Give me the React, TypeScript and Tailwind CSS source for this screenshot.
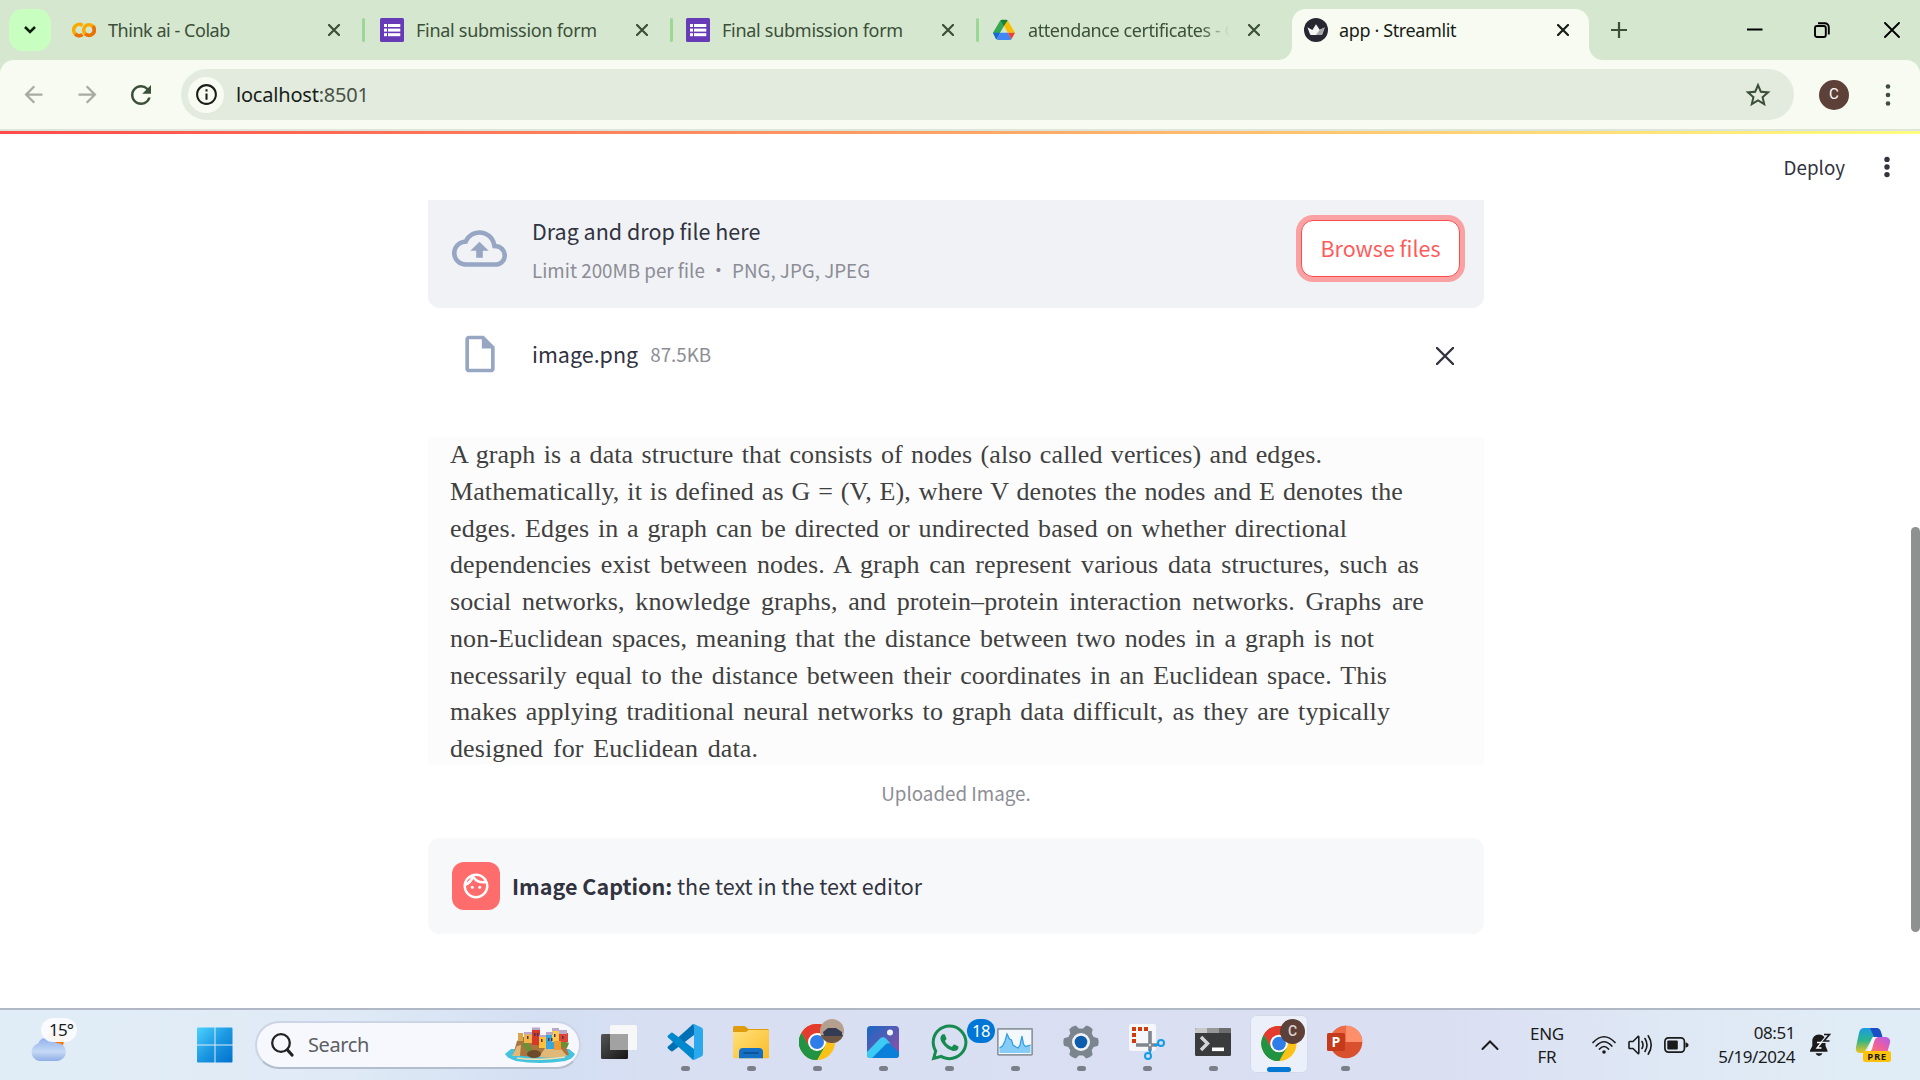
import React from "react";
import {
  MdArrowBack,
  MdArrowForward,
  MdRefresh,
  MdInfoOutline,
  MdStarBorder,
  MdOutlineCloudUpload,
  MdOutlineInsertDriveFile,
  MdOutlineFace,
} from "react-icons/md";
import { FaWhatsapp } from "react-icons/fa";

const Cross = ({ className = "", size = 12, sw = 2.2 }: { className?: string; size?: number; sw?: number }) => (
  <svg width={size} height={size} viewBox={`0 0 ${size} ${size}`} className={className}>
    <path d={`M1 1L${size - 1} ${size - 1}M${size - 1} 1L1 ${size - 1}`} stroke="currentColor" strokeWidth={sw} strokeLinecap="round" fill="none" />
  </svg>
);

const Dots = ({ gap, r }: { gap: number; r: number }) => (
  <svg width="8" height="28" viewBox="0 0 8 28" fill="currentColor">
    <circle cx="4" cy={14 - gap} r={r} />
    <circle cx="4" cy="14" r={r} />
    <circle cx="4" cy={14 + gap} r={r} />
  </svg>
);

const Colab = () => (
  <svg width="24" height="24" viewBox="0 0 24 24" fill="none" strokeWidth="3.6">
    <path d="M10.5 7.4A5.6 5.6 0 1 0 10.5 16.6" stroke="#f9ab00" />
    <path d="M3.3 16A5.6 5.6 0 0 0 10.5 16.6" stroke="#e8710a" />
    <circle cx="17" cy="12" r="5.3" stroke="#f9ab00" />
    <path d="M20.8 8.2A5.3 5.3 0 0 1 13.2 15.8" stroke="#e8710a" />
  </svg>
);

const Forms = () => (
  <svg width="24" height="24" viewBox="0 0 24 24">
    <rect width="24" height="24" rx="1.5" fill="#673ab7" />
    <g fill="#fff">
      <rect x="4" y="6" width="3" height="3" />
      <rect x="4" y="10.6" width="3" height="3" />
      <rect x="4" y="15.2" width="3" height="3" />
      <rect x="8" y="6" width="12.3" height="3" />
      <rect x="8" y="10.6" width="12.3" height="3" />
      <rect x="8" y="15.2" width="12.3" height="3" />
    </g>
  </svg>
);

const Drive = () => (
  <svg width="24" height="22" viewBox="0 0 24 22">
    <path d="M8.2 1.5 1 13.8l3.5 6L12 7z" fill="#34a853" />
    <path d="M8.2 1.5Q9 .8 10 .8h4q1.200 0 1.800.7L12 7.500z" fill="#188038" />
    <path d="M15.8 1.500 23 13.800h-7.100L12 7z" fill="#fbbc04" />
    <path d="M1 13.800h7.200l-3.600 6.500Q4 20 3.500 19.200z" fill="#1967d2" />
    <path d="M8.200 13.800h7.700l3.500 6.500Q19 21 17.500 21h-11q-1.200 0-1.900-.7z" fill="#4285f4" />
    <path d="M15.900 13.800H23l-3 5.500-.7 1z" fill="#ea4335" />
  </svg>
);

const Crown = () => (
  <svg width="24" height="24" viewBox="0 0 24 24">
    <circle cx="12" cy="12" r="12" fill="#262730" />
    <path d="M3.400 9.300 8.400 12 12 6.300l3.700 5.500 5-2.400-2.500 6.900q-.3.700-1 .7H7q-.7 0-1-.7z" fill="#f4f4f4" />
    <path d="m20.700 9.400-5 2.400L12 17h5.200q.7 0 1-.7z" fill="#a9a9ab" />
  </svg>
);

function Tab({ icon, title, sep, titleClass, fade }: { icon: React.ReactNode; title: string; sep?: boolean; titleClass: string; fade?: boolean }) {
  return (
    <div className="flex h-full w-[306px] items-center text-[#3b4f39]">
      <div className="flex w-6 justify-center">{icon}</div>
      <div
        className={
          "ml-3 w-[201px] overflow-hidden whitespace-nowrap text-[18px] leading-[28px] " +
          titleClass +
          (fade ? " [mask-image:linear-gradient(to_right,#000_86%,transparent)]" : "")
        }
      >
        {title}
      </div>
      <Cross className="ml-[19px]" />
      {sep && <div className="ml-[22px] h-6 w-[3px] rounded-full bg-[#9bd795]" />}
    </div>
  );
}

function TabStrip() {
  return (
    <div className="flex h-[60px] items-center bg-[#d5e7cf]">
      <div className="ml-[9px] flex h-[42px] w-[42px] items-center justify-center rounded-[14px] bg-[#c8ffc0]">
        <svg width="14" height="10" viewBox="0 0 14 10">
          <path d="M2 2l5 5 5-5" fill="none" stroke="#0d1f0d" strokeWidth="2.600" />
        </svg>
      </div>
      <div className="ml-[21px] flex h-full">
        <Tab icon={<Colab />} title="Think ai - Colab" sep titleClass="tracking-[-0.46px]" />
        <div className="w-[2px]" />
        <Tab icon={<Forms />} title="Final submission form" sep titleClass="tracking-[-0.28px]" />
        <Tab icon={<Forms />} title="Final submission form" sep titleClass="tracking-[-0.28px]" />
        <Tab icon={<Drive />} title="attendance certificates - G" titleClass="tracking-[-0.42px]" fade />
      </div>
      <div className="-ml-[20px] flex h-full items-end">
        <svg width="14" height="14" viewBox="0 0 14 14">
          <path d="M14 0v14H0A14 14 0 0 0 14 0z" fill="#f8fbf2" />
        </svg>
        <div className="flex h-[51px] w-[297px] items-center rounded-t-[14px] bg-[#f8fbf2] pb-[9px] pl-3 text-[#171d17]">
          <Crown />
          <div className="ml-[11px] w-[218px] whitespace-nowrap text-[18px] leading-[28px] tracking-[-0.38px]">app · Streamlit</div>
          <Cross />
        </div>
        <svg width="14" height="14" viewBox="0 0 14 14">
          <path d="M0 0v14H14A14 14 0 0 1 0 0z" fill="#f8fbf2" />
        </svg>
      </div>
      <svg className="ml-2" width="16" height="16" viewBox="0 0 16 16">
        <path d="M8 0v16M0 8h16" stroke="#3b4f39" strokeWidth="2.200" />
      </svg>
      <svg className="ml-[120px]" width="16" height="16" viewBox="0 0 16 16">
        <path d="M0 7.500h15.500" stroke="#000" strokeWidth="2" />
      </svg>
      <svg className="ml-[51px]" width="16" height="16" viewBox="0 0 16 16" fill="none" stroke="#000" strokeWidth="1.900">
        <rect x="1" y="4" width="10.800" height="11" rx="2" />
        <path d="M4 1.200h6.800a4 4 0 0 1 4 4V12.500" />
      </svg>
      <Cross className="ml-[54px] text-black" size={16} sw={1.9} />
    </div>
  );
}

function Toolbar() {
  return (
    <div className="bg-[#d5e7cf]">
      <div className="flex h-[69px] items-center rounded-t-[14px] bg-[#f8fbf2] text-[#3b4f39]">
        <MdArrowBack className="ml-5 text-[#a6aca2]" size={27} />
        <MdArrowForward className="ml-[27px] text-[#a6aca2]" size={27} />
        <MdRefresh className="ml-[25px]" size={30} />
        <div className="ml-[25px] flex h-[51px] w-[1613px] items-center rounded-full bg-[#e3ebdf]">
          <div className="ml-[7px] flex h-9 w-9 items-center justify-center rounded-full bg-[#f8fbf2] text-[#171d17]">
            <MdInfoOutline size={25} />
          </div>
          <div className="ml-3 grow whitespace-nowrap text-[20px] leading-[28px] tracking-[-0.2px] text-[#171d17]">
            localhost<span className="text-[#475245]">:8501</span>
          </div>
          <MdStarBorder className="mr-[21px]" size={30} />
        </div>
        <div className="ml-[25px] flex h-[30px] w-[30px] items-center justify-center rounded-full bg-[#5d4037] font-[Roboto] text-[15px] text-white">C</div>
        <div className="ml-[35px]">
          <Dots gap={8.500} r={2.300} />
        </div>
      </div>
    </div>
  );
}

const paragraph: [string, string][] = [
  ["A graph is a data structure that consists of nodes (also called vertices) and edges.", "w-[872px]"],
  ["Mathematically, it is defined as G = (V, E), where V denotes the nodes and E denotes the", "w-[953px]"],
  ["edges. Edges in a graph can be directed or undirected based on whether directional", "w-[897px]"],
  ["dependencies exist between nodes. A graph can represent various data structures, such as", "w-[969px]"],
  ["social networks, knowledge graphs, and protein–protein interaction networks. Graphs are", "w-[974px]"],
  ["non-Euclidean spaces, meaning that the distance between two nodes in a graph is not", "w-[924px]"],
  ["necessarily equal to the distance between their coordinates in an Euclidean space. This", "w-[937px]"],
  ["makes applying traditional neural networks to graph data difficult, as they are typically", "w-[940px]"],
  ["designed for Euclidean data.", "w-[308px]"],
];

function Content() {
  return (
    <div className="flex h-[874px] bg-white font-['Noto_Sans_CJK_SC',sans-serif] text-[#31333f]">
      <div className="ml-[428px] w-[1056px] pt-[66px]">
        <div className="flex h-[108px] rounded-b-[12px] bg-[#f0f2f6]">
          <MdOutlineCloudUpload className="mt-[21px] ml-6 text-[#97a6c3]" size={55} />
          <div className="ml-[25px] grow whitespace-nowrap">
            <div className="mt-[14px] text-[21.500px] leading-[34px]">Drag and drop file here</div>
            <div className="mt-[7px] text-[18.800px] leading-[30px] text-[#8c8d95]">Limit 200MB per file • PNG, JPG, JPEG</div>
          </div>
          <div className="mt-[20px] mr-6 flex h-[57px] w-[159px] items-center justify-center rounded-[12px] border-[1.500px] border-[#ff4b4b] bg-white text-[21.500px] whitespace-nowrap text-[#ff5a5a] ring-[5px] ring-[#f9a1a3]">
            Browse files
          </div>
        </div>
        <div className="flex h-[92px] items-center">
          <MdOutlineInsertDriveFile className="ml-[30px] text-[#97a6c3]" size={44} />
          <div className="ml-[30px] text-[21.500px] leading-[34px]">image.png</div>
          <div className="ml-3 grow text-[18.800px] leading-[34px] text-[#8c8d95]">87.5KB</div>
          <Cross className="mt-1 mr-[30px]" size={18} sw={2.400} />
        </div>
        <div className="mt-[38px] h-[327px] overflow-hidden bg-[#fcfcfc] pl-[22px] font-[Georgia,'Liberation_Serif',serif] text-[26px] leading-[36.750px] text-[#404040]">
          <div className="-mt-px">
            {paragraph.map(([line, w]) => (
              <div key={line} className={"whitespace-nowrap tracking-[0.1px] [text-align-last:justify] " + w}>
                {line}
              </div>
            ))}
          </div>
        </div>
        <div className="flex h-[73px] justify-center pt-[13px] text-[18.800px] leading-[30px] text-[#8c8d95]">Uploaded Image.</div>
        <div className="flex h-24 items-center rounded-[12px] bg-[#f7f8fa] pl-6">
          <div className="flex h-12 w-12 items-center justify-center rounded-[12px] bg-[#ff6c6c] text-white">
            <MdOutlineFace size={30} />
          </div>
          <div className="ml-3 text-[21.500px] leading-[34px] whitespace-nowrap">
            <span className="font-semibold">Image Caption:</span> the text in the text editor
          </div>
        </div>
      </div>
      <div className="flex grow items-start justify-end">
        <div className="mt-[18px] mr-[38px] text-[18.800px] leading-[30px]">Deploy</div>
        <div className="mt-[19px] h-7 w-2">
          <Dots gap={7.600} r={2.700} />
        </div>
        <div className="mt-[393px] ml-5 h-[405px] w-[9px] rounded-full bg-[#8f9090]" />
      </div>
    </div>
  );
}

const Weather = () => (
  <svg width="50" height="48" viewBox="0 0 50 48">
    <defs>
      <linearGradient id="cloud" x1="0" y1="0" x2="0" y2="1">
        <stop offset="0" stopColor="#8fb0ec" />
        <stop offset=".6" stopColor="#c6d9f5" />
        <stop offset="1" stopColor="#8eaee6" />
      </linearGradient>
    </defs>
    <circle cx="26" cy="24" r="9" fill="#f5790d" />
    <path d="M10 44a9 9 0 0 1-1-17.500A10 10 0 0 1 27 26a9 9 0 0 1 1.500 18z" fill="url(#cloud)" />
    <rect x="12" y="1" width="36" height="24" rx="12" fill="#fbfcfe" fillOpacity=".94" />
  </svg>
);

const Windows = () => (
  <svg width="36" height="36" viewBox="0 0 36 36">
    <defs>
      <linearGradient id="win" gradientUnits="userSpaceOnUse" x1="0" y1="0" x2="36" y2="36">
        <stop offset="0" stopColor="#4ed3ff" />
        <stop offset=".5" stopColor="#1c98e2" />
        <stop offset="1" stopColor="#0070cf" />
      </linearGradient>
    </defs>
    <path d="M0 1.500Q0 .5 1 .5h16.500v17H0zM18.500.5h16q1 0 1 1v16h-17zM0 18.500h17.500v17H1q-1 0-1-1zM18.500 18.500h17v16q0 1-1 1h-16z" fill="url(#win)" />
  </svg>
);

const Village = () => (
  <svg width="70" height="36" viewBox="0 0 70 36">
    <path d="M0 27l6-5h58l6 5q-2 5-10 7-25 4-49 0Q3 32 0 27z" fill="#43c3dd" />
    <path d="M8 28l4-14 8-5 10 4 16-1 13 2 5 14q-25 4-56 0z" fill="#a87440" />
    <path d="M7 29l5-10 4-1-1 11zM34 30l8-12 10-1 10 12q-14 3-28 1z" fill="#e0b878" />
    <path d="M17 17l5-3 5 8-2 7zM56 13l8 3-2 5-6-1z" fill="#6c8f35" />
    <rect x="13" y="6" width="5" height="8" fill="#d8a848" />
    <rect x="19" y="7" width="8" height="9" fill="#f3b44b" />
    <rect x="27" y="2" width="8" height="16" fill="#d5392b" />
    <rect x="34" y="9" width="7" height="12" fill="#ffc13b" />
    <rect x="41" y="7" width="8" height="15" fill="#38a5dd" />
    <rect x="47" y="3" width="7" height="12" fill="#ffcb4a" />
    <rect x="54" y="6" width="9" height="9" fill="#dd4536" />
    <rect x="49" y="14" width="7" height="9" fill="#f09a31" />
    <path d="M19 5h8v2.500h-8zM27 .5h8V3h-8zM34 8h7v2h-7zM41 5h7v3h-7zM47 1h7v3h-7zM54 3h8v4h-8z" fill="#b9a8c8" />
    <path d="M29 6h1.500v3H29zM32 6h1.500v3H32zM36 12h1.500v3H36zM43 11h1.500v3H43zM46 11h1.500v3H46zM49 7h1.500v3H49zM57 9h1.500v3H57zM22 9h1.500v3H22z" fill="#4b3650" />
    <ellipse cx="29" cy="27" rx="7" ry="4" fill="#6e4a2b" />
    <path d="M12 31q20 3 48-1" stroke="#f4dfae" strokeWidth="1.500" fill="none" />
  </svg>
);

const TaskView = () => (
  <svg width="36" height="36" viewBox="0 0 36 36">
    <defs>
      <linearGradient id="tv" x1="0" y1="0" x2="1" y2="1">
        <stop offset="0" stopColor="#555" />
        <stop offset="1" stopColor="#161616" />
      </linearGradient>
    </defs>
    <rect y="10" width="27" height="25" rx="1.500" fill="url(#tv)" />
    <rect x="9" y="1" width="27" height="25" rx="1.500" fill="#f7f7f7" />
    <path d="M9 10h18v16H10.500Q9 26 9 24.500z" fill="#a2a2a2" />
  </svg>
);

const VSCode = () => (
  <svg width="36" height="36" viewBox="0 0 36 36">
    <path d="M27 0v11L6 27q-1.200.8-2.200 0L1 24.600q-1-1 0-2L25 1z" fill="#0070b5" />
    <path d="M27 36V25L6 9q-1.200-.8-2.200 0L1 11.400q-1 1 0 2L25 35z" fill="#0088cf" />
    <path d="M27 0l7.500 3.600Q36 4.400 36 6v24q0 1.600-1.500 2.400L27 36q-1.500.2-2.500-.8Q27 36 27 33V3q0-3-2.500-2.200Q25.500-.2 27 0z" fill="#2ba9ec" />
  </svg>
);

const Folder = () => (
  <svg width="36" height="36" viewBox="0 0 36 36">
    <defs>
      <linearGradient id="fold" x1="0" y1="0" x2="1" y2="1">
        <stop offset="0" stopColor="#ffe17e" />
        <stop offset="1" stopColor="#fcbb24" />
      </linearGradient>
    </defs>
    <path d="M0 3.500Q0 2 1.500 2H11q1 0 2 1l2.500 2H34.500Q36 5 36 6.500V20H0z" fill="#e09b0b" />
    <path d="M0 8h12q1.500 0 2.500-1l1-1H35q1 0 1 1v26q0 1.300-1.300 1.300H1.300Q0 34.300 0 33z" fill="url(#fold)" />
    <path d="M6 34.300V28q0-4 4-4h16q4 0 4 4v6.300z" fill="#1370c4" />
    <path d="M11 29h14" stroke="#0b4a8c" strokeWidth="1.600" strokeLinecap="round" />
  </svg>
);

const Chrome = () => (
  <svg width="36" height="36" viewBox="0 0 36 36">
    <circle cx="18" cy="18" r="18" fill="#fbc116" />
    <path d="M18 18 2.400 9A18 18 0 0 1 33.600 9H18z" fill="#e33b2e" />
    <path d="M2.400 9A18 18 0 0 0 18 36l7.800-13.500L18 18 10.200 22.500z" fill="#229342" />
    <path d="M2.400 9A18 18 0 0 1 33.600 9H18L10.200 22.500z" fill="#e33b2e" />
    <path d="M2.400 9l7.800 13.500L18 27l4 1-4 8A18 18 0 0 1 2.400 9z" fill="#229342" />
    <circle cx="18" cy="18" r="9" fill="#fff" />
    <circle cx="18" cy="18" r="7" fill="#2f7de9" />
  </svg>
);

const Photos = () => (
  <svg width="32" height="32" viewBox="0 0 32 32">
    <defs>
      <linearGradient id="ph" x1="0" y1="0" x2="1" y2="1">
        <stop offset="0" stopColor="#1769c6" />
        <stop offset=".6" stopColor="#6558b0" />
        <stop offset="1" stopColor="#9a4da8" />
      </linearGradient>
      <clipPath id="phc">
        <rect width="32" height="32" rx="3.500" />
      </clipPath>
    </defs>
    <g clipPath="url(#phc)">
      <rect width="32" height="32" fill="url(#ph)" />
      <path d="M4 32l14-14q2.500-1.500 5 0l12 11v5H4z" fill="#0b80d8" />
      <path d="M-2 28 13 12.500q3-2.500 6 0l4.500 5q-3-1-5 1L5 32H-2z" fill="#3ccbf4" />
      <circle cx="23" cy="6.500" r="3" fill="#f1f3fb" />
    </g>
  </svg>
);

const Monitor = () => (
  <svg width="36" height="28" viewBox="0 0 36 28">
    <rect x=".8" y=".8" width="34.400" height="26" rx="1" fill="#f2f8fc" stroke="#8e979e" strokeWidth="1.800" />
    <path d="M2.500 25V20l3-2L8 13l2-7 2.500 5 2 1 1.500 5 3 2 2 1 2-3 2-9 1.500 8 2 2.500L33.500 17v8z" fill="#86ccf6" />
    <path d="M2.500 20l3-2L8 13l2-7 2.500 5 2 1 1.500 5 3 2 2 1 2-3 2-9 1.500 8 2 2.500L33.500 17" fill="none" stroke="#2f9de0" strokeWidth="1.200" />
  </svg>
);

const Gear = () => (
  <svg width="36" height="36" viewBox="0 0 36 36">
    <g fill="#7b858d">
      <circle cx="18" cy="18" r="13.500" />
      {[30, 90, 150, 210, 270, 330].map((a) => (
        <path key={a} d="M12.500 7 14.300 1Q18-.3 21.700 1L23.500 7z" transform={`rotate(${a} 18 18)`} />
      ))}
    </g>
    <circle cx="18" cy="18" r="9" fill="#f0f2f4" />
    <circle cx="18" cy="18" r="6.300" fill="#0d5cae" />
  </svg>
);

const Snip = () => (
  <svg width="36" height="36" viewBox="0 0 36 36">
    <rect width="27" height="27" rx="2.500" fill="#f6f7fa" />
    <g fill="#d43b0a">
      <rect x="3" y="3" width="4" height="4" />
      <rect x="9" y="3" width="4" height="4" />
      <rect x="15" y="3" width="4" height="4" />
      <rect x="3" y="9" width="4" height="4" />
      <rect x="3" y="15" width="4" height="4" />
    </g>
    <path d="M21 7v20M7 21h21" stroke="#80868d" strokeWidth="3.600" />
    <circle cx="21" cy="21" r="1.200" fill="#ddd" />
    <circle cx="32" cy="19" r="3" fill="none" stroke="#169be6" strokeWidth="2" />
    <circle cx="19" cy="32" r="3" fill="none" stroke="#169be6" strokeWidth="2" />
    <path d="M25 21l5 0M21 25v5" stroke="#169be6" strokeWidth="2" />
  </svg>
);

const Terminal = () => (
  <svg width="36" height="28" viewBox="0 0 36 28">
    <rect width="36" height="28" rx="1.500" fill="#3a3b3c" />
    <path d="M0 5V1.500Q0 0 1.500 0H12v5z" fill="#c9c9c9" />
    <path d="M12 0h12v5H12z" fill="#979797" />
    <path d="M24 0h10.500Q36 0 36 1.500V5H24z" fill="#6d6d6d" />
    <path d="M6 9l6.500 6.500L6 22" stroke="#d5d5d5" strokeWidth="3.400" fill="none" />
    <rect x="17" y="19.500" width="12" height="3.600" fill="#fff" />
  </svg>
);

const PowerPoint = () => (
  <svg width="36" height="34" viewBox="0 0 36 34">
    <circle cx="19" cy="17" r="16.300" fill="#d9502e" />
    <path d="M19 .7A16.300 16.300 0 0 1 35.300 17H19z" fill="#ff8f6b" />
    <path d="M19 .7V17H2.700A16.300 16.300 0 0 1 19 .7z" fill="#ed6c47" />
    <rect y="8" width="18" height="18" rx="1.500" fill="#c43a1b" />
    <text x="9" y="22" fontSize="14" fontWeight="700" fill="#fff" textAnchor="middle" fontFamily="Open Sans, sans-serif">P</text>
  </svg>
);

function Slot({ children, badge, dot = true }: { children: React.ReactNode; badge?: React.ReactNode; dot?: boolean }) {
  return (
    <div className="relative flex h-full w-[66px] flex-col items-center pt-[14px]">
      <div className="flex h-9 items-center">{children}</div>
      <div className={"mt-[6px] h-[5px] w-[9px] rounded-full " + (dot ? "bg-[#7b7f89]" : "")} />
      {badge}
    </div>
  );
}

function Taskbar() {
  return (
    <div className="h-[72px] border-t-2 border-[#b0b8c5] bg-[linear-gradient(90deg,#e1edf6_0%,#dfeaf6_18%,#d4dff3_28%,#d9dff2_38%,#dadff2_75%,#dfe9f5_88%,#e0edf6_100%)] text-[#1b1b1b]">
      <div className="flex h-[70px] items-center">
        <div className="relative ml-[29px] h-12 w-[50px] self-start pt-[7px]">
          <Weather />
          <span className="absolute top-[9px] left-[20px] text-[17px] leading-[22px] tracking-[-0.8px]">15°</span>
        </div>
        <div className="ml-[118px] w-[58px]">
          <Windows />
        </div>
        <div className="flex h-12 w-[326px] items-center rounded-full border-2 border-[#ccd5e5] border-b-[#b4bdcc] bg-[#f6f8fd]">
          <svg className="ml-[13px]" width="24" height="24" viewBox="0 0 24 24" fill="none" stroke="#222" strokeLinecap="round">
            <circle cx="11" cy="10" r="8.800" strokeWidth="2.300" />
            <path d="M17.500 17l4.500 5" strokeWidth="3.200" />
          </svg>
          <div className="ml-[14px] w-[197px] text-[20px] leading-[28px] tracking-[-0.4px] text-[#5c5f63]">Search</div>
          <Village />
        </div>
        <div className="ml-[5px] flex h-full">
          <Slot dot={false}>
            <TaskView />
          </Slot>
          <Slot>
            <VSCode />
          </Slot>
          <Slot>
            <Folder />
          </Slot>
          <Slot
            badge={
              <svg className="absolute top-[9px] left-[36px]" width="24" height="24" viewBox="0 0 24 24">
                <defs>
                  <clipPath id="av">
                    <circle cx="12" cy="12" r="12" />
                  </clipPath>
                </defs>
                <g clipPath="url(#av)">
                  <rect width="24" height="24" fill="#b5a08e" />
                  <rect y="16" width="24" height="8" fill="#6f5544" />
                  <path d="M3 13l5-4h8l3 2 3 2v4H4z" fill="#333c52" />
                </g>
              </svg>
            }
          >
            <Chrome />
          </Slot>
          <Slot>
            <Photos />
          </Slot>
          <Slot
            badge={
              <div className="absolute top-[9px] left-[51px] z-10 h-6 w-7 rounded-full bg-[#0077d6] text-center text-[16.500px] leading-[24px] text-white tracking-[-0.5px]">18</div>
            }
          >
            <FaWhatsapp size={41} className="text-[#168b4f]" />
          </Slot>
          <Slot>
            <Monitor />
          </Slot>
          <Slot>
            <Gear />
          </Slot>
          <Slot>
            <Snip />
          </Slot>
          <Slot>
            <Terminal />
          </Slot>
          <div className="relative mt-[5px] mr-[4px] ml-[4px] flex h-[58px] w-[58px] flex-col items-center rounded-[6px] border border-[#d3dbea] bg-[#ecf0fa] pt-[10px]">
            <Chrome />
            <div className="mt-[6px] h-[5px] w-6 rounded-full bg-[#0078d4]" />
            <div className="absolute top-[3px] left-[29px] h-[25px] w-[25px] rounded-full bg-[#5d4037] text-center font-[Roboto] text-[14px] leading-[25px] font-medium text-[#ddd5d2]">C</div>
          </div>
          <Slot>
            <PowerPoint />
          </Slot>
        </div>
        <svg className="ml-[103px]" width="18" height="12" viewBox="0 0 18 12">
          <path d="M1.500 10 9 2.500 16.500 10" fill="none" stroke="#1b1b1b" strokeWidth="2" strokeLinecap="round" />
        </svg>
        <div className="ml-[24px] w-[48px] text-center text-[17px] leading-[23px] tracking-[-0.3px]">
          ENG
          <br />
          FR
        </div>
        <svg className="ml-[21px]" width="24" height="20" viewBox="0 0 24 20" fill="none" stroke="#1b1b1b" strokeWidth="1.700" strokeLinecap="round">
          <path d="M1 7.500Q12-4 23 7.500M4.200 11Q12 2.500 19.800 11M7.500 14Q12 9 16.500 14" />
          <circle cx="12" cy="17" r="1.800" fill="#1b1b1b" stroke="none" />
        </svg>
        <svg className="ml-3" width="25" height="22" viewBox="0 0 25 22" fill="none" stroke="#1b1b1b" strokeWidth="1.600" strokeLinecap="round" strokeLinejoin="round">
          <path d="M1 8.300Q1 7.500 1.800 7.500H5L10 2.500Q10.800 2 10.800 3v16q0 1-.8.500L5 14.500H1.800Q1 14.500 1 13.700z" />
          <path d="M14 7.500q2 3.500 0 7M17 4.500q4 6.500 0 13M20.200 1.800q6 9.200 0 18.400" />
        </svg>
        <svg className="ml-[11px]" width="25" height="16" viewBox="0 0 25 16">
          <rect x=".9" y=".9" width="19.500" height="14.200" rx="3.500" fill="none" stroke="#1b1b1b" strokeWidth="1.700" />
          <rect x="3.300" y="3.500" width="10.500" height="9" rx="1" fill="#1b1b1b" />
          <path d="M21.500 5.500Q24.500 6 24.500 8t-3 2.500z" fill="#1b1b1b" />
        </svg>
        <div className="w-[106px] text-right text-[17px] leading-[24px] tracking-[-0.45px]">
          08:51
          <br />
          5/19/2024
        </div>
        <svg className="ml-[14px]" width="22" height="24" viewBox="0 0 22 24">
          <path d="M10 1.500q6.500.3 6.500 7v4.500l2 4.500v1.300H1v-1.300L3.300 13V8.500q0-6.700 6.700-7zM6.500 20.300h7Q12.500 23 10 23t-3.500-2.700z" fill="#1b1b1b" />
          <path d="M8 9.500h4.500L8 15h4.500" fill="none" stroke="#fff" strokeWidth="1.400" />
          <path d="M15 1.500h5.500L15 8h5.500" fill="none" stroke="#dfe9f5" strokeWidth="4" />
          <path d="M15 1.500h5.500L15 8h5.500" fill="none" stroke="#1b1b1b" strokeWidth="1.700" />
        </svg>
        <svg className="ml-6" width="36" height="36" viewBox="0 0 36 36">
          <defs>
            <linearGradient id="cp1" x1="0" y1="0" x2="0" y2="1">
              <stop offset="0" stopColor="#1b9be4" />
              <stop offset=".5" stopColor="#2db58c" />
              <stop offset="1" stopColor="#f0c419" />
            </linearGradient>
            <linearGradient id="cp2" x1="1" y1="0" x2="0" y2="1">
              <stop offset="0" stopColor="#b05cf0" />
              <stop offset=".5" stopColor="#ee5e9e" />
              <stop offset="1" stopColor="#fb8a4c" />
            </linearGradient>
          </defs>
          <path d="M9 1h12q4 0 5 5l1 4h-9L9 26H4q-4-1-3-6L4 6q1-5 5-5z" fill="url(#cp1)" />
          <path d="M15 1h7q3 .5 4 4l1.500 5H19z" fill="#1d4fc4" />
          <path d="M21 10h10q5 1 4 6l-3 10H10q5-1 6-5l2-8q1-3 3-3z" fill="url(#cp2)" />
          <path d="M18 10h5q-3 1-4 5l-2 7q-1 3-4 3l3-10q.5-4 2-5z" fill="#f5f7fb" />
          <rect x="8" y="24" width="28" height="11" rx="2.500" fill="#ffc20a" />
          <text x="22" y="33" fontSize="9.500" fontWeight="700" fill="#1a1a1a" textAnchor="middle" letterSpacing=".6" fontFamily="Open Sans, sans-serif">PRE</text>
        </svg>
      </div>
    </div>
  );
}

export default function App() {
  return (
    <div className="flex h-[1080px] w-[1920px] flex-col overflow-hidden bg-white font-['Noto_Sans',sans-serif]">
      <TabStrip />
      <Toolbar />
      <div className="h-[2px] bg-[#dde5da]" />
      <div className="h-[3px] bg-[linear-gradient(90deg,#ff4b4b,#fffd80)]" />
      <Content />
      <Taskbar />
    </div>
  );
}
